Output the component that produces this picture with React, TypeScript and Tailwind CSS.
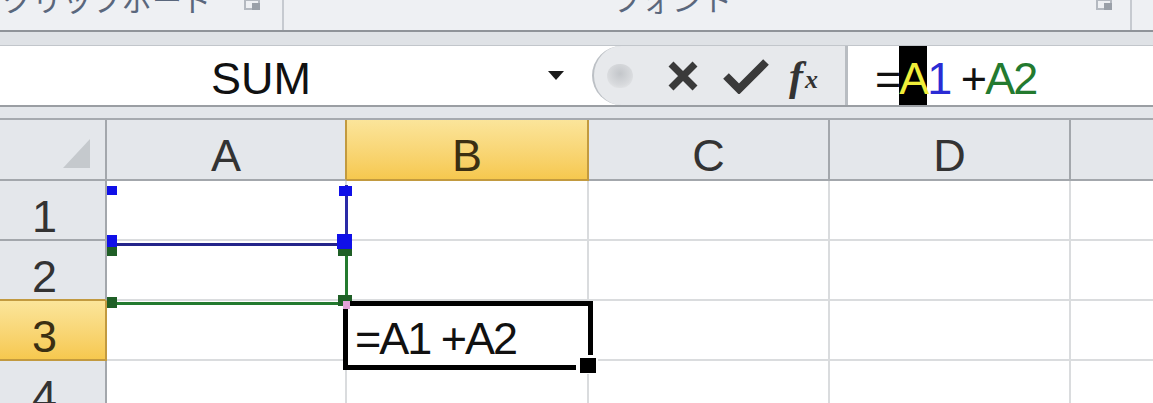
import React from 'react';

const SANS = "font-['Liberation_Sans',Arial,sans-serif]";

type Col = { key: string; width: string; active?: boolean };

const COLS: Col[] = [
  { key: 'A', width: 'w-[240px]' },
  { key: 'B', width: 'w-[242px]', active: true },
  { key: 'C', width: 'w-[241px]' },
  { key: 'D', width: 'w-[241px]' },
];

const ROWS = [1, 2, 3, 4];
const ACTIVE_ROW = 3;

const Launcher = () => (
  <svg width="18" height="11" viewBox="0 0 18 11" className="shrink-0">
    <rect x="1" y="0" width="14" height="9" fill="none" stroke="#b4b9c0" strokeWidth="2" />
    <rect x="8" y="3" width="8" height="7" fill="#9aa0a8" />
  </svg>
);

const Ribbon = () => (
  <div className="flex h-[32px] overflow-hidden bg-[#eef0f3] border-b-2 border-[#8f9399]">
    <div className="flex w-[284px] items-start border-r-2 border-[#c6cad0]">
      <span className="-mt-[17px] ml-[2px] text-[30px] leading-none text-[#5a677c] font-['Noto_Sans_CJK_JP',sans-serif]">
        クリップボード
      </span>
      <div className="ml-auto mr-[20px]">
        <Launcher />
      </div>
    </div>
    <div className="flex w-[848px] items-start border-r-2 border-[#c6cad0]">
      <span className="-mt-[17px] ml-[328px] text-[30px] leading-none text-[#5a677c] font-['Noto_Sans_CJK_JP',sans-serif]">
        フォント
      </span>
      <div className="ml-auto mr-[16px]">
        <Launcher />
      </div>
    </div>
    <div className="flex-1" />
  </div>
);

const FormulaBar = () => (
  <div className={`flex h-[61px] bg-white border-b-2 border-[#9a9ea3] ${SANS}`}>
    <div className="flex w-[592px] items-center">
      <div className="w-[522px] pt-[6px] text-center text-[45px] leading-none text-[#111]">SUM</div>
      <svg width="16" height="9" viewBox="0 0 16 9" className="ml-[26px]">
        <polygon points="0,0 16,0 8,9" fill="#1a1a1a" />
      </svg>
    </div>
    <div className="flex w-[253px] items-center rounded-l-[32px] border-l-2 border-[#bcc0c5] bg-[#e7e9ec]">
      <div className="ml-[13px] h-[24px] w-[26px] rounded-full bg-[radial-gradient(circle_at_50%_40%,#c3c6ca,#d8dadd_60%,#eceef0)]" />
      <svg width="32" height="32" viewBox="0 0 32 32" className="ml-[34px]">
        <path d="M4 4 L28 28 M28 4 L4 28" stroke="#3a3a3a" strokeWidth="7" />
      </svg>
      <svg width="46" height="36" viewBox="0 0 46 36" className="ml-[24px]">
        <path d="M3 18 L16 31 L43 4" stroke="#3a3a3a" strokeWidth="8" fill="none" />
      </svg>
      <div className="ml-[20px] flex items-end font-['Liberation_Serif',serif] italic font-bold text-[#333] leading-none">
        <span className="text-[42px]">f</span>
        <span className="ml-[2px] mb-[4px] text-[26px]">x</span>
      </div>
    </div>
    <div className="w-[3px] bg-[#b9bdc2]" />
    <div className="flex flex-1 items-stretch pl-[27px] text-[45px] leading-none tracking-[-2px]">
      <span className="flex items-center pt-[6px] text-[#111]">=</span>
      <span className="flex items-center bg-black pt-[6px] text-[#f0ee3a]">A</span>
      <span className="flex items-center pt-[6px] text-[#2b2bd4]">1</span>
      <span className="flex items-center pt-[6px] text-[#111]">&nbsp;+</span>
      <span className="flex items-center pt-[6px] text-[#237a2f]">A2</span>
    </div>
  </div>
);

const headerBorder = (i: number) => {
  const nextActive = COLS[i + 1]?.active;
  return COLS[i].active || nextActive ? 'border-[#c29a3f]' : 'border-[#a3a7ac]';
};

const ColumnHeaders = () => (
  <div className={`flex h-[61px] ${SANS}`}>
    <div className="flex w-[107px] items-end justify-end border-r-2 border-b-2 border-[#a3a7ac] bg-[#e4e7eb] pr-[15px] pb-[11px]">
      <svg width="27" height="29" viewBox="0 0 27 29">
        <polygon points="27,0 27,29 0,29" fill="#c5c9cd" />
      </svg>
    </div>
    {COLS.map((c, i) => (
      <div
        key={c.key}
        className={`flex ${c.width} items-center justify-center border-r-2 border-b-2 pt-[12px] text-[45px] leading-none ${headerBorder(i)} ${
          c.active
            ? 'bg-linear-to-b from-[#fbe59a] to-[#f6c84e] text-[#3b2f12] border-b-[#c29a3f]'
            : 'bg-[#e4e7eb] text-[#333] border-b-[#a3a7ac]'
        }`}
      >
        {c.key}
      </div>
    ))}
    <div className="flex-1 border-b-2 border-[#a3a7ac] bg-[#e4e7eb]" />
  </div>
);

const GridRow = ({ n }: { n: number }) => {
  const active = n === ACTIVE_ROW;
  const beforeActive = n + 1 === ACTIVE_ROW;
  return (
    <div className={`flex h-[60px] shrink-0 ${SANS}`}>
      <div
        className={`flex w-[107px] items-center justify-center border-r-2 border-b-2 pt-[12px] pr-[16px] text-[45px] leading-none ${
          active
            ? 'bg-linear-to-b from-[#fbe59a] to-[#f6c84e] text-[#3b2f12] border-[#c29a3f]'
            : beforeActive
              ? 'bg-[#e4e7eb] text-[#333] border-r-[#a3a7ac] border-b-[#c29a3f]'
              : 'bg-[#e4e7eb] text-[#333] border-[#a3a7ac]'
        }`}
      >
        {n}
      </div>
      {COLS.map(c => (
        <div key={c.key} className={`${c.width} border-r-2 border-b-2 border-[#dadcde] bg-white`} />
      ))}
      <div className="flex-1 border-b-2 border-[#dadcde] bg-white" />
    </div>
  );
};

export default function App() {
  return (
    <div className="relative h-[403px] w-[1153px] overflow-hidden bg-[#eef0f3]">
      <Ribbon />
      <div className="h-[14px] border-b border-[#c2c6cb] bg-[#dfe2e6]" />
      <FormulaBar />
      <div className="h-[13px] border-b-2 border-[#a6aaaf] bg-[#e3e6ea]" />
      <ColumnHeaders />
      {ROWS.map(n => (
        <GridRow key={n} n={n} />
      ))}

      {/* A1 range reference (blue) */}
      <div className="absolute left-[345px] top-[185px] h-[61px] w-[3px] bg-[#2a2aa6]" />
      <div className="absolute left-[107px] top-[243px] h-[3px] w-[240px] bg-[#24248a]" />
      {/* A2 range reference (green) */}
      <div className="absolute left-[345px] top-[250px] h-[55px] w-[3px] bg-[#237a2f]" />
      <div className="absolute left-[107px] top-[302px] h-[3px] w-[240px] bg-[#237a2f]" />
      {/* green handles */}
      <div className="absolute left-[107px] top-[246px] h-[10px] w-[10px] bg-[#1f5f26]" />
      <div className="absolute left-[338px] top-[246px] h-[10px] w-[14px] bg-[#1f5f26]" />
      <div className="absolute left-[107px] top-[297px] h-[11px] w-[10px] bg-[#1f5f26]" />
      <div className="absolute left-[338px] top-[295px] h-[11px] w-[14px] bg-[#1f5f26]" />
      {/* blue handles */}
      <div className="absolute left-[107px] top-[186px] h-[9px] w-[10px] bg-[#1010e8]" />
      <div className="absolute left-[339px] top-[186px] h-[10px] w-[13px] bg-[#1010e8]" />
      <div className="absolute left-[107px] top-[235px] h-[12px] w-[10px] bg-[#1010e8]" />
      <div className="absolute left-[337px] top-[234px] h-[15px] w-[15px] bg-[#1010e8]" />

      {/* active cell B3 */}
      <div className={`absolute left-[343px] top-[301px] flex h-[69px] w-[250px] items-center border-[5px] border-black bg-white pl-[7px] pt-[6px] text-[45px] leading-none tracking-[-2px] text-[#111] ${SANS}`}>
        =A1&nbsp;+A2
      </div>
      <div className="absolute left-[576px] top-[355px] h-[19px] w-[22px] bg-white" />
      <div className="absolute left-[580px] top-[358px] h-[15px] w-[16px] bg-black" />
      <div className="absolute left-[343px] top-[301px] h-[8px] w-[7px] bg-[#e4a2d9]" />
    </div>
  );
}
